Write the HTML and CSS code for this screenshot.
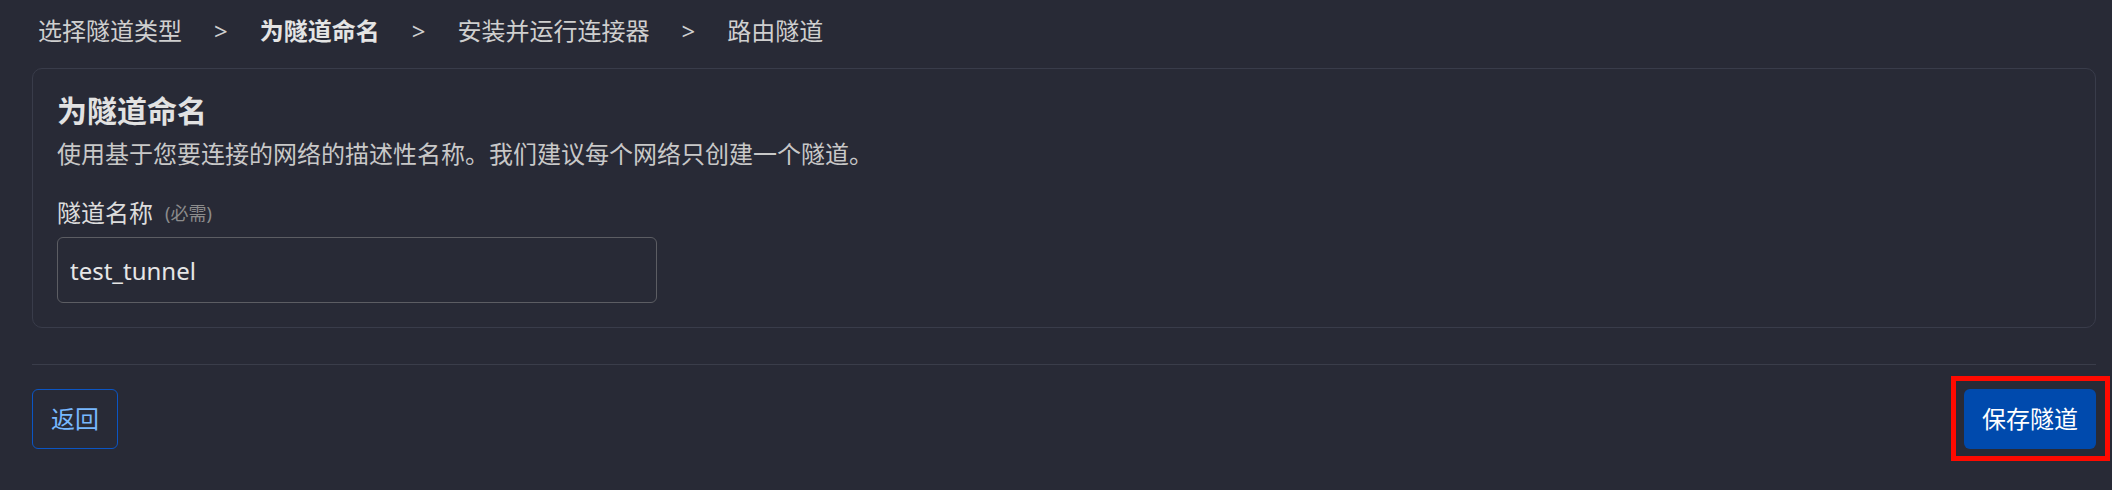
FILE: index.html
```html
<!DOCTYPE html>
<html lang="zh-CN">
<head>
<meta charset="utf-8">
<title>为隧道命名</title>
<link rel="stylesheet" href="styles.css">
</head>
<body>
<div class="page">
  <nav class="crumbs">
    <span class="crumb">选择隧道类型</span>
    <span class="sep">&gt;</span>
    <span class="crumb active">为隧道命名</span>
    <span class="sep">&gt;</span>
    <span class="crumb">安装并运行连接器</span>
    <span class="sep">&gt;</span>
    <span class="crumb">路由隧道</span>
  </nav>

  <section class="card">
    <h2 class="card-title">为隧道命名</h2>
    <p class="card-desc">使用基于您要连接的网络的描述性名称。我们建议每个网络只创建一个隧道。</p>
    <label class="field-label" for="tn">隧道名称<span class="req">(必需)</span></label>
    <input class="field-input" id="tn" type="text" value="test_tunnel">
  </section>

  <hr class="divider">

  <div class="actions">
    <button class="btn btn-outline">返回</button>
    <div class="save-wrap">
      <button class="btn btn-primary">保存隧道</button>
      <span class="highlight"></span>
    </div>
  </div>
</div>
</body>
</html>
```

FILE: styles.css
```css
html, body {
  margin: 0;
  padding: 0;
  background: #282a36;
}
body {
  font-family: "Noto Sans", "Noto Sans CJK SC", sans-serif;
  color: #d6d6d6;
  height: 490px;
  overflow: hidden;
}
.page {
  padding: 0 16px 0 32px;
}
.crumbs {
  display: flex;
  align-items: center;
  padding-top: 13px;
  padding-left: 6px;
  font-size: 24px;
  line-height: 36px;
  color: #cfcfcf;
}
.sep {
  margin: 0 32px;
  color: #cfcfcf;
}
.crumb.active {
  font-weight: 700;
  color: #e4e4e4;
}
.card {
  margin-top: 19px;
  border: 1px solid #393c4a;
  border-radius: 10px;
  padding: 24px 24px 24px 24px;
  display: flex;
  flex-direction: column;
  align-items: flex-start;
}
.card-title {
  margin: 0;
  font-size: 30px;
  line-height: 36px;
  font-weight: 700;
  color: #e2e2e2;
}
.card-desc {
  margin: 7px 0 0;
  font-size: 24px;
  line-height: 36px;
  color: #c8c8c8;
}
.field-label {
  margin-top: 23px;
  font-size: 24px;
  line-height: 36px;
  color: #dcdcdc;
  display: flex;
  align-items: center;
}
.req {
  margin-left: 12px;
  font-size: 18px;
  color: #8c8c8c;
}
.field-input {
  margin-top: 6px;
  box-sizing: border-box;
  width: 600px;
  height: 66px;
  padding: 0 12px;
  background: transparent;
  border: 1px solid #5c5d63;
  border-radius: 6px;
  font-family: "Noto Sans", "Noto Sans CJK SC", sans-serif;
  font-size: 24px;
  color: #e6e6e6;
  outline: none;
}
.divider {
  margin: 36px 0 0;
  border: 0;
  border-top: 1px solid #3a3d4a;
  height: 0;
}
.actions {
  margin-top: 24px;
  display: flex;
  justify-content: space-between;
  align-items: flex-start;
}
.btn {
  font-family: "Noto Sans", "Noto Sans CJK SC", sans-serif;
  font-size: 24px;
  line-height: 34px;
  border-radius: 6px;
  cursor: pointer;
}
.btn-outline {
  padding: 12px 18px;
  background: transparent;
  border: 1px solid #0b55c4;
  color: #78b8ff;
}
.btn-primary {
  padding: 13px 18px;
  border: 0;
  background: #004aad;
  color: #ffffff;
}
.save-wrap {
  position: relative;
  display: flex;
}
.highlight {
  position: absolute;
  left: -13px;
  top: -13px;
  right: -14px;
  bottom: -12px;
  border: 5px solid #ff0a00;
  pointer-events: none;
}
```
